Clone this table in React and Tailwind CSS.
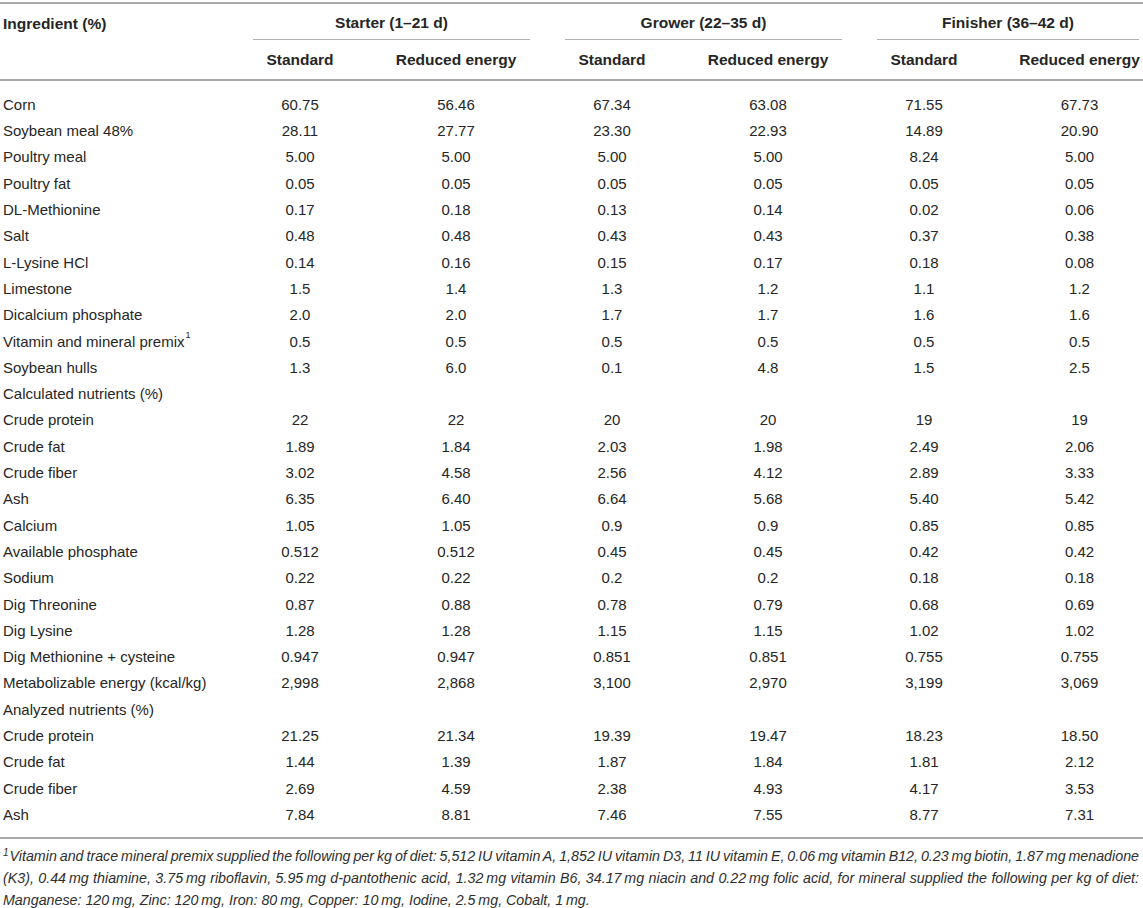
const rows = [
  ["Corn", ["60.75", "56.46", "67.34", "63.08", "71.55", "67.73"]],
  ["Soybean meal 48%", ["28.11", "27.77", "23.30", "22.93", "14.89", "20.90"]],
  ["Poultry meal", ["5.00", "5.00", "5.00", "5.00", "8.24", "5.00"]],
  ["Poultry fat", ["0.05", "0.05", "0.05", "0.05", "0.05", "0.05"]],
  ["DL-Methionine", ["0.17", "0.18", "0.13", "0.14", "0.02", "0.06"]],
  ["Salt", ["0.48", "0.48", "0.43", "0.43", "0.37", "0.38"]],
  ["L-Lysine HCl", ["0.14", "0.16", "0.15", "0.17", "0.18", "0.08"]],
  ["Limestone", ["1.5", "1.4", "1.3", "1.2", "1.1", "1.2"]],
  ["Dicalcium phosphate", ["2.0", "2.0", "1.7", "1.7", "1.6", "1.6"]],
  ["Vitamin and mineral premix", ["0.5", "0.5", "0.5", "0.5", "0.5", "0.5"], true],
  ["Soybean hulls", ["1.3", "6.0", "0.1", "4.8", "1.5", "2.5"]],
  ["Calculated nutrients (%)", []],
  ["Crude protein", ["22", "22", "20", "20", "19", "19"]],
  ["Crude fat", ["1.89", "1.84", "2.03", "1.98", "2.49", "2.06"]],
  ["Crude fiber", ["3.02", "4.58", "2.56", "4.12", "2.89", "3.33"]],
  ["Ash", ["6.35", "6.40", "6.64", "5.68", "5.40", "5.42"]],
  ["Calcium", ["1.05", "1.05", "0.9", "0.9", "0.85", "0.85"]],
  ["Available phosphate", ["0.512", "0.512", "0.45", "0.45", "0.42", "0.42"]],
  ["Sodium", ["0.22", "0.22", "0.2", "0.2", "0.18", "0.18"]],
  ["Dig Threonine", ["0.87", "0.88", "0.78", "0.79", "0.68", "0.69"]],
  ["Dig Lysine", ["1.28", "1.28", "1.15", "1.15", "1.02", "1.02"]],
  ["Dig Methionine + cysteine", ["0.947", "0.947", "0.851", "0.851", "0.755", "0.755"]],
  ["Metabolizable energy (kcal/kg)", ["2,998", "2,868", "3,100", "2,970", "3,199", "3,069"]],
  ["Analyzed nutrients (%)", []],
  ["Crude protein", ["21.25", "21.34", "19.39", "19.47", "18.23", "18.50"]],
  ["Crude fat", ["1.44", "1.39", "1.87", "1.84", "1.81", "2.12"]],
  ["Crude fiber", ["2.69", "4.59", "2.38", "4.93", "4.17", "3.53"]],
  ["Ash", ["7.84", "8.81", "7.46", "7.55", "8.77", "7.31"]],
];

const groups = ["Starter (1–21 d)", "Grower (22–35 d)", "Finisher (36–42 d)"];
const grid = "grid grid-cols-[222px_156px_156px_156px_156px_156px_141px]";
const ts = "\u2009";

function Cell({ i, children, className = "" }) {
  // last column sits against the page edge, nudge its centre right
  const pad = i === 5 ? "pl-[14px]" : "";
  return <div className={`flex items-center justify-center ${pad} ${className}`}>{children}</div>;
}

export default function App() {
  return (
    <div className="w-[1143px] bg-white pt-[2px] text-[15px] text-[#262626] font-['Liberation_Sans',Arial,sans-serif]">
      <div className="border-t-2 border-[#a9a9a9]">
        {/* header row 1 */}
        <div className={`${grid} h-[36px] font-bold text-[15.5px]`}>
          <div className="flex items-center pl-[3px] pt-[3px]">Ingredient (%)</div>
          {groups.map((g) => (
            <div key={g} className="col-span-2 flex h-full">
              <div className="ml-[31px] mr-[4px] pt-[3px] flex-1 h-full flex items-center justify-center border-b-[1.5px] border-[#b0b0b0]">
                {g}
              </div>
            </div>
          ))}
        </div>
        {/* header row 2 */}
        <div className={`${grid} h-[41px] font-bold text-[15.5px] border-b-2 border-[#a9a9a9]`}>
          <div />
          {[0, 1, 2, 3, 4, 5].map((i) => (
            <Cell key={i} i={i} className="pt-[1px]">{i % 2 === 0 ? "Standard" : "Reduced energy"}</Cell>
          ))}
        </div>

        <div className="pt-[11px] pb-[9px] border-b-2 border-[#a9a9a9]">
          {rows.map(([name, vals, sup], r) => (
            <div key={r} className={`${grid} h-[26.3px]`}>
              <div className="flex items-center pl-[3px] whitespace-nowrap">
                {name}
                {sup && <sup className="text-[9px] ml-[1px] -mt-[4px]">1</sup>}
              </div>
              {vals.map((v, i) => (
                <Cell key={i} i={i}>{v}</Cell>
              ))}
            </div>
          ))}
        </div>

        {/* footnote: first two lines are justified edge to edge */}
        <div className="pt-[6px] pl-[3px] pr-[4px] italic text-[14.25px] leading-[22px] text-[#2e2e2e]">
          <div className="whitespace-nowrap text-justify [text-align-last:justify] [word-spacing:-2px]">
            <sup className="text-[10px] mr-[1px]">1</sup>Vitamin and trace mineral premix supplied the following per kg of diet: 5,512 IU vitamin A, 1,852 IU vitamin D3, 11 IU vitamin E, 0.06{ts}mg vitamin B12, 0.23{ts}mg biotin, 1.87{ts}mg menadione
          </div>
          <div className="whitespace-nowrap text-justify [text-align-last:justify] [word-spacing:-2px]">
            (K3), 0.44{ts}mg thiamine, 3.75{ts}mg riboflavin, 5.95{ts}mg d-pantothenic acid, 1.32{ts}mg vitamin B6, 34.17{ts}mg niacin and 0.22{ts}mg folic acid, for mineral supplied the following per kg of diet:
          </div>
          <div className="whitespace-nowrap">
            Manganese: 120{ts}mg, Zinc: 120{ts}mg, Iron: 80{ts}mg, Copper: 10{ts}mg, Iodine, 2.5{ts}mg, Cobalt, 1{ts}mg.
          </div>
        </div>
      </div>
    </div>
  );
}
